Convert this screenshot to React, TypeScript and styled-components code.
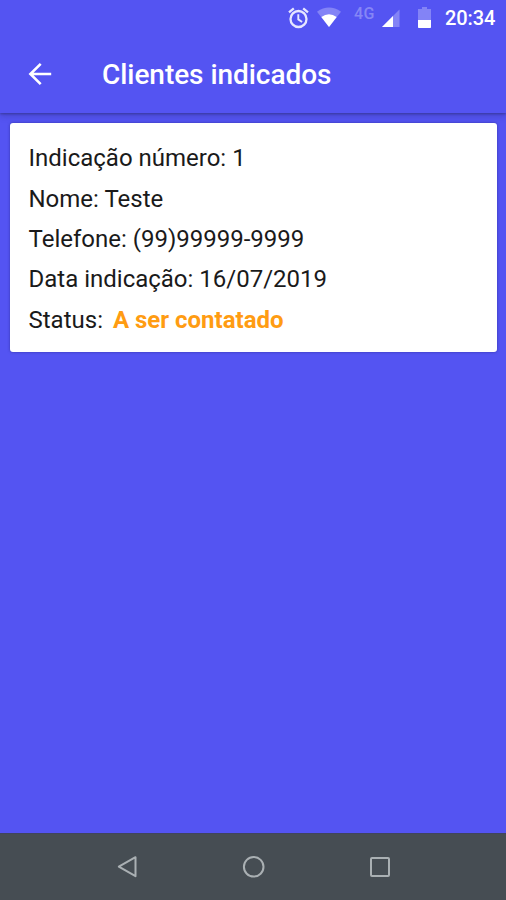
import React from "react";
import styled, { createGlobalStyle } from "styled-components";

const GlobalStyle = createGlobalStyle`
  * { box-sizing: border-box; }
  body { margin: 0; background: #5454f2; font-family: Roboto, sans-serif; }
`;

const Screen = styled.div`
  display: flex;
  flex-direction: column;
  width: 506px;
  height: 900px;
  overflow: hidden;
  background: #5454f2;
`;

const StatusBar = styled.header`
  display: flex;
  flex: none;
  height: 36px;
  padding: 7px 10px 0 288px;
  color: #fff;
`;

const StatusIcon = styled.svg<{ $gap: number }>`
  flex: none;
  margin-right: ${(p) => p.$gap}px;
`;

const Network = styled.span`
  width: 20px;
  margin: -1px 8px 0 0;
  font-size: 16px;
  line-height: 15px;
  font-weight: 500;
  letter-spacing: 0.5px;
  color: #8686f6;
  white-space: nowrap;
`;

const Clock = styled.time`
  font-size: 20px;
  line-height: 23px;
  font-weight: 500;
  letter-spacing: -0.1px;
  white-space: nowrap;
`;

const AppBar = styled.div`
  display: flex;
  flex: none;
  align-items: center;
  height: 77px;
  padding: 0 28px;
  box-shadow: 0 1px 2px rgba(40, 40, 100, 0.45), 0 3px 6px rgba(40, 40, 110, 0.3);
  clip-path: inset(0 0 -10px 0);
`;

const BackButton = styled.button`
  display: flex;
  width: 74px;
  padding: 0 0 2px;
  border: 0;
  background: none;
`;

const Title = styled.h1`
  margin: 1px 0 0;
  font-size: 28px;
  line-height: 32px;
  font-weight: 500;
  letter-spacing: -0.05px;
  color: #fff;
  white-space: nowrap;
`;

const Content = styled.main`
  flex: 1;
  padding: 10px 9px 0 10px;
`;

const Card = styled.section`
  height: 229px;
  padding: 15.4px 18.5px;
  border-radius: 3px;
  background: #fff;
  box-shadow: 0 0 3px rgba(30, 30, 110, 0.55);
`;

const Row = styled.p`
  display: flex;
  margin: 0;
  font-size: 24px;
  line-height: 40.3px;
  color: #1a1a1a;
  white-space: pre;
`;

const Status = styled.strong`
  margin-left: 10px;
  font-weight: 700;
  color: #ff9c12;
`;

const NavBar = styled.nav`
  display: flex;
  flex: none;
  align-items: center;
  justify-content: space-between;
  height: 67px;
  padding: 0 114px 0 115px;
  border-top: 1px solid #40445f;
  background: #464d53;
`;

const NavButton = styled.button`
  display: flex;
  padding: 0;
  border: 0;
  background: none;
`;

const rows = [
  { label: "Indicação número:", value: "1" },
  { label: "Nome:", value: "Teste" },
  { label: "Telefone:", value: "(99)99999-9999" },
  { label: "Data indicação:", value: "16/07/2019" },
];

export default function App() {
  return (
    <>
      <GlobalStyle />
      <Screen>
        <StatusBar>
          <StatusIcon $gap={8} width="21" height="22" viewBox="0 0 21 22" fill="none" stroke="#e6e6ff">
            <circle cx="10.5" cy="12" r="8" strokeWidth="2.3" />
            <path d="M1 5.3 5.8 1.3M20 5.3 15.2 1.3" strokeWidth="2.3" />
            <path d="M10.3 7.2v5.2l3.8 2.6" strokeWidth="1.9" />
          </StatusIcon>
          <StatusIcon $gap={13} width="24" height="22" viewBox="0 0 24 22">
            <path d="M0 4.8Q12-3.6 24 4.8L12 20Z" fill="#8383f6" />
            <path d="M4.3 9.9Q12 4.8 19.7 9.9L12 20Z" fill="#fff" />
          </StatusIcon>
          <Network>4G</Network>
          <StatusIcon $gap={18} width="18" height="22" viewBox="0 0 18 22">
            <path d="M0 20 17.5 2.5V20Z" fill="#8383f6" />
            <path d="M0 20 11 9V20Z" fill="#fff" />
          </StatusIcon>
          <StatusIcon $gap={14} width="13" height="22" viewBox="0 0 13 22">
            <path d="M4 0h5v2h4v11H0V2h4Z" fill="#8383f6" />
            <path d="M0 13h13v7.2q0 .8-.8.8H.8Q0 21 0 20.2Z" fill="#fff" />
          </StatusIcon>
          <Clock>20:34</Clock>
        </StatusBar>
        <AppBar>
          <BackButton aria-label="Voltar">
            <svg width="24" height="24" viewBox="0 0 24 24" fill="none" stroke="#fff" strokeWidth="2.6">
              <path d="M23.2 12H2.5M12.7 1.9 2.4 12l10.3 10.1" />
            </svg>
          </BackButton>
          <Title>Clientes indicados</Title>
        </AppBar>
        <Content>
          <Card>
            {rows.map((r) => (
              <Row key={r.label}>{`${r.label} ${r.value}`}</Row>
            ))}
            <Row>
              Status:<Status>A ser contatado</Status>
            </Row>
          </Card>
        </Content>
        <NavBar>
          <NavButton aria-label="Voltar">
            <svg width="24" height="24" viewBox="0 0 24 24" fill="none" stroke="#aab0b3" strokeWidth="2" strokeLinejoin="round">
              <path d="M20.5 2.2v19L3.8 11.7Z" />
            </svg>
          </NavButton>
          <NavButton aria-label="Início">
            <svg width="24" height="24" viewBox="0 0 24 24" fill="none" stroke="#aab0b3" strokeWidth="2">
              <circle cx="11.7" cy="11.8" r="9.8" />
            </svg>
          </NavButton>
          <NavButton aria-label="Recentes">
            <svg width="24" height="24" viewBox="0 0 24 24" fill="none" stroke="#aab0b3" strokeWidth="2">
              <rect x="3" y="3" width="18" height="18" rx="1" />
            </svg>
          </NavButton>
        </NavBar>
      </Screen>
    </>
  );
}
